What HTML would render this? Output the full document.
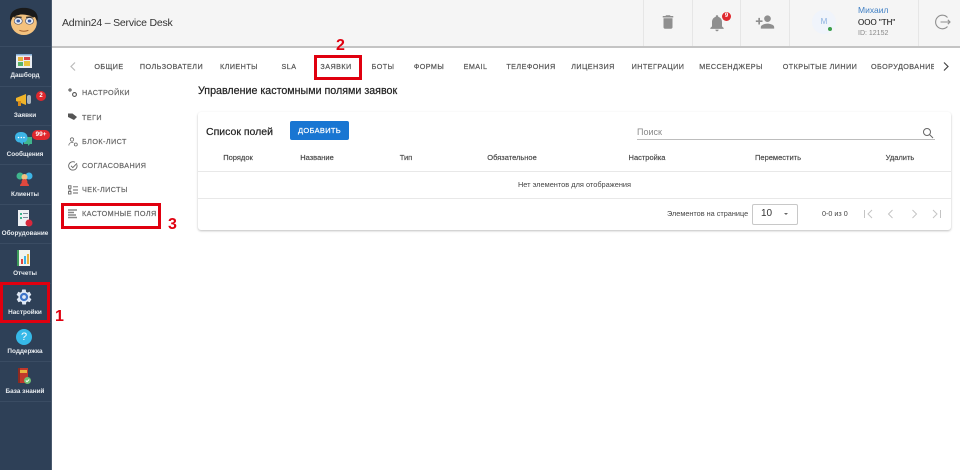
<!DOCTYPE html>
<html><head><meta charset="utf-8">
<style>
html,body{margin:0;padding:0;width:960px;height:470px;overflow:hidden;background:#fff;font-family:"Liberation Sans",sans-serif;color:#333}
.a{position:absolute;white-space:nowrap}
#side{position:absolute;left:0;top:0;width:51px;height:470px;background:#2e4057;border-right:1px solid #4a5a6e;box-sizing:content-box}
.sep{position:absolute;left:0;width:51px;height:1px;background:#3a4c63}
.sl{position:absolute;left:0;width:50px;text-align:center;color:#e8ecf0;font-size:6.4px;font-weight:bold;white-space:nowrap;line-height:9px}
.ic{position:absolute}
#head{position:absolute;left:52px;top:0;width:908px;height:46px;background:#f5f5f5;border-bottom:2px solid #c4c4c4}
.vs{position:absolute;top:0;width:1px;height:46px;background:#e6e6e6}
.tab{position:absolute;top:62px;font-size:7.2px;line-height:10px;letter-spacing:.45px;color:#555;-webkit-text-stroke:.2px #555;white-space:nowrap;text-align:center;transform:translateX(-50%)}
.m{position:absolute;left:82px;font-size:7.2px;line-height:10px;letter-spacing:.45px;color:#666;-webkit-text-stroke:.2px #666;white-space:nowrap}
.th{position:absolute;top:153px;font-size:7.5px;line-height:10px;color:#444;-webkit-text-stroke:.15px #444;white-space:nowrap;transform:translateX(-50%)}
.red{position:absolute;border:3px solid #e0000f;box-sizing:border-box}
.num{position:absolute;color:#e0000f;font-weight:bold;font-size:16px;line-height:16px}
</style></head><body>
<div id="side">
<div class="sep" style="top:46px"></div><div class="sep" style="top:86px"></div><div class="sep" style="top:125px"></div><div class="sep" style="top:164px"></div><div class="sep" style="top:204px"></div><div class="sep" style="top:243px"></div><div class="sep" style="top:283px"></div><div class="sep" style="top:322px"></div><div class="sep" style="top:361px"></div><div class="sep" style="top:401px"></div>

<svg class="ic" style="left:6.600px;top:7px" width="33.750" height="28" viewBox="0 0 30 30" preserveAspectRatio="none">
<ellipse cx="15" cy="17" rx="11.500" ry="13" fill="#f4c27e"/>
<path d="M3 16 C1 5 8 1 15 1 C22 1 29 5 27 16 L25 11 C20 9 17 8 12 8 C9 9 6 10 5 11Z" fill="#1a1a1a"/>
<circle cx="10" cy="15" r="3.600" fill="#e8eef8" stroke="#556" stroke-width=".6"/><circle cx="20" cy="15" r="3.600" fill="#e8eef8" stroke="#556" stroke-width=".6"/>
<circle cx="10" cy="15" r="1.600" fill="#3a5aa0"/><circle cx="20" cy="15" r="1.600" fill="#3a5aa0"/>
<path d="M6 10.500 L13 11 M17 11 L24 10.500" stroke="#222" stroke-width="1.200"/>
<path d="M11 25 Q15 27 19 25" stroke="#a5612e" fill="none" stroke-width="1"/>
</svg>

<svg class="ic" style="left:16px;top:54px" width="17" height="15" viewBox="0 0 17 15">
<rect x="0" y="1" width="16" height="13" fill="#e9edf2"/><rect x="2" y="3" width="5" height="4" fill="#e8b33c"/><rect x="8" y="3" width="6" height="3" fill="#d9454a"/><rect x="2" y="8" width="5" height="4" fill="#58b368"/><rect x="8" y="7" width="6" height="5" fill="#e8c43c"/><rect x="0" y="0" width="16" height="1.500" fill="#7fa8d0"/>
</svg>
<div class="sl" style="top:71px">Дашборд</div>

<svg class="ic" style="left:15px;top:93px" width="18" height="14" viewBox="0 0 18 14">
<path d="M1 5 L11 1 V12 L1 8Z" fill="#f0b429"/><rect x="12" y="2" width="4" height="9" rx="2" fill="#aab4bd"/><rect x="3" y="8" width="3" height="5" fill="#d88a1a"/>
</svg>
<div class="ic" style="left:36px;top:91px;width:10px;height:10px;border-radius:50%;background:#e0282e;color:#fff;font-size:6px;line-height:10px;text-align:center;font-weight:bold">2</div>
<div class="sl" style="top:111px">Заявки</div>

<svg class="ic" style="left:15px;top:132px" width="18" height="15" viewBox="0 0 18 15">
<path d="M9 5 H17 V12 H15 L13 14 V12 H9Z" fill="#3fb58d"/><path d="M6 0 C1 0 0 3 0 5.500 C0 8 2 10.500 5 10.500 L8 13 V10.500 C11 10.500 12.500 8 12.500 5.500 C12.500 3 11 0 6 0Z" fill="#3db5e6"/>
<circle cx="3.500" cy="5.500" r=".8" fill="#fff"/><circle cx="6.300" cy="5.500" r=".8" fill="#fff"/><circle cx="9" cy="5.500" r=".8" fill="#fff"/>
</svg>
<div class="ic" style="left:32px;top:130px;width:18px;height:10px;border-radius:5px;background:#e0282e;color:#fff;font-size:6.500px;line-height:10px;text-align:center;font-weight:bold">99+</div>
<div class="sl" style="top:150px">Сообщения</div>

<svg class="ic" style="left:16px;top:172px" width="17" height="15" viewBox="0 0 17 15">
<circle cx="4" cy="4" r="3.500" fill="#3fb58d"/><circle cx="13" cy="4" r="3.500" fill="#3db5e6"/><circle cx="8.500" cy="5" r="3" fill="#f0c080"/><path d="M4 14 C4 9 13 9 13 14Z" fill="#e0483e"/><circle cx="8.500" cy="10" r="3" fill="#e0483e"/>
</svg>
<div class="sl" style="top:190px">Клиенты</div>

<svg class="ic" style="left:17px;top:210px" width="16" height="17" viewBox="0 0 16 17">
<rect x="1" y="0" width="11" height="16" fill="#eef1f4"/><rect x="3" y="3" width="2" height="2" fill="#3fb58d"/><rect x="3" y="7" width="2" height="2" fill="#3fb58d"/><rect x="6" y="3" width="5" height="1" fill="#7a8a9a"/><rect x="6" y="7" width="5" height="1" fill="#7a8a9a"/><circle cx="12" cy="13" r="3.500" fill="#d8283c"/>
</svg>
<div class="sl" style="top:229px">Оборудование</div>

<svg class="ic" style="left:17px;top:250px" width="14" height="16" viewBox="0 0 14 16">
<rect x="0" y="0" width="13" height="16" fill="#f2f4ee"/><rect x="0" y="0" width="2" height="16" fill="#3d9a5a"/><rect x="4" y="9" width="2" height="5" fill="#e0483e"/><rect x="7" y="6" width="2" height="8" fill="#3db5e6"/><rect x="10" y="4" width="2" height="10" fill="#e8b33c"/>
</svg>
<div class="sl" style="top:269px">Отчеты</div>

<svg class="ic" style="left:15px;top:288px" width="18" height="18" viewBox="0 0 24 24">
<path fill="#dfe8f5" d="M19.400 13c.1-.3.1-.7.1-1s0-.7-.1-1l2.100-1.600c.2-.2.2-.4.1-.6l-2-3.500c-.1-.2-.4-.3-.6-.2l-2.500 1c-.5-.4-1.100-.7-1.700-1l-.4-2.600c0-.3-.2-.5-.5-.5h-4c-.3 0-.5.2-.5.4l-.4 2.700c-.6.2-1.200.6-1.700 1l-2.500-1c-.2-.1-.5 0-.6.2l-2 3.500c-.1.2-.1.5.1.6L4.600 11c0 .3-.1.7-.1 1s0 .7.1 1l-2.100 1.600c-.2.2-.2.4-.1.6l2 3.500c.1.2.4.3.6.2l2.500-1c.5.4 1.100.7 1.700 1l.4 2.600c0 .3.2.5.5.5h4c.3 0 .5-.2.5-.4l.4-2.700c.6-.2 1.200-.6 1.700-1l2.500 1c.2.1.5 0 .6-.2l2-3.500c.1-.2.1-.5-.1-.6z"/>
<circle cx="12" cy="12" r="5.500" fill="#3e74c9"/><circle cx="12" cy="12" r="2.500" fill="#dfe8f5"/>
</svg>
<div class="sl" style="top:308px">Настройки</div>

<div class="ic" style="left:16px;top:329px;width:16px;height:16px;border-radius:50%;background:#36b9e8;color:#fff;font-size:11px;line-height:16px;text-align:center">?</div>
<div class="sl" style="top:347px">Поддержка</div>

<svg class="ic" style="left:17px;top:368px" width="15" height="17" viewBox="0 0 15 17">
<rect x="1" y="0" width="10" height="15" fill="#c0392b"/><rect x="1" y="0" width="2" height="15" fill="#8e2a20"/><rect x="3" y="2" width="7" height="3" fill="#e8b33c"/><circle cx="10.500" cy="12.500" r="3.500" fill="#6fbf73"/><path d="M8.800 12.500l1.200 1.200 2.200-2.200" stroke="#fff" fill="none" stroke-width="1"/>
</svg>
<div class="sl" style="top:387px">База знаний</div>
</div>

<div id="head">
<div class="a" style="left:10px;top:16px;font-size:10.500px;line-height:14px;letter-spacing:-.2px;color:#333">Admin24 – Service Desk</div>
<div class="vs" style="left:591px"></div><div class="vs" style="left:640px"></div><div class="vs" style="left:688px"></div><div class="vs" style="left:737px"></div><div class="vs" style="left:866px"></div>
<svg class="ic" style="left:607px;top:13px" width="18" height="18" viewBox="0 0 24 24"><path fill="#8f8f8f" d="M6 19c0 1.100.9 2 2 2h8c1.100 0 2-.9 2-2V7H6v12zM19 4h-3.500l-1-1h-5l-1 1H5v2h14V4z"/></svg>
<svg class="ic" style="left:655px;top:13px" width="20" height="20" viewBox="0 0 24 24"><path fill="#8f8f8f" d="M12 22c1.100 0 2-.9 2-2h-4c0 1.100.9 2 2 2zm6-6v-5c0-3.100-1.600-5.600-4.500-6.300V4c0-.8-.7-1.500-1.500-1.500s-1.500.7-1.500 1.500v.7C7.600 5.400 6 7.900 6 11v5l-2 2v1h16v-1l-2-2z"/></svg>
<div class="ic" style="left:670px;top:12px;width:9px;height:9px;border-radius:50%;background:#e0282e;color:#fff;font-size:6px;line-height:9px;text-align:center;font-weight:bold">9</div>
<svg class="ic" style="left:703px;top:12px" width="20" height="20" viewBox="0 0 24 24"><path fill="#8f8f8f" d="M15 12c2.200 0 4-1.800 4-4s-1.800-4-4-4-4 1.800-4 4 1.800 4 4 4zm-9-2V7H4v3H1v2h3v3h2v-3h3v-2H6zm9 4c-2.700 0-8 1.300-8 4v2h16v-2c0-2.700-5.300-4-8-4z"/></svg>
<div class="ic" style="left:760px;top:10px;width:24px;height:24px;border-radius:50%;background:#f0f4fb;color:#8ab0e0;font-size:8px;line-height:24px;text-align:center">М</div>
<div class="ic" style="left:776px;top:27px;width:4px;height:4px;border-radius:50%;background:#3c9e4a"></div>
<div class="a" style="left:806px;top:5px;font-size:8.500px;line-height:11px;color:#3f7fc4">Михаил</div>
<div class="a" style="left:806px;top:17px;font-size:8px;line-height:11px;color:#222;-webkit-text-stroke:.1px #222">ООО "ТН"</div>
<div class="a" style="left:806px;top:29px;font-size:7px;line-height:10px;color:#888">ID: 12152</div>
<svg class="ic" style="left:883px;top:14px" width="16" height="16" viewBox="0 0 16 16" fill="none" stroke="#8f8f8f" stroke-width="1.100"><path d="M12.500 3.500A6.800 6.800 0 1 0 12.500 12.500"/><path d="M5.500 8H15M12.800 5.800L15 8l-2.200 2.200"/></svg>
</div>

<svg class="ic" style="left:69px;top:61px" width="8" height="11" viewBox="0 0 8 11"><path d="M6 1.500L2 5.500l4 4" stroke="#bbb" stroke-width="1.200" fill="none"/></svg>
<div class="tab" style="left:109px">ОБЩИЕ</div>
<div class="tab" style="left:171.500px">ПОЛЬЗОВАТЕЛИ</div>
<div class="tab" style="left:239px">КЛИЕНТЫ</div>
<div class="tab" style="left:289px">SLA</div>
<div class="tab" style="left:336px">ЗАЯВКИ</div>
<div class="tab" style="left:383px">БОТЫ</div>
<div class="tab" style="left:429px">ФОРМЫ</div>
<div class="tab" style="left:475.500px">EMAIL</div>
<div class="tab" style="left:531px">ТЕЛЕФОНИЯ</div>
<div class="tab" style="left:593px">ЛИЦЕНЗИЯ</div>
<div class="tab" style="left:658px">ИНТЕГРАЦИИ</div>
<div class="tab" style="left:731px">МЕССЕНДЖЕРЫ</div>
<div class="tab" style="left:820px">ОТКРЫТЫЕ ЛИНИИ</div>
<div class="a" style="left:871px;top:62px;width:63px;overflow:hidden;font-size:7.200px;line-height:10px;letter-spacing:.45px;color:#555;-webkit-text-stroke:.2px #555">ОБОРУДОВАНИЕ</div>
<svg class="ic" style="left:942px;top:61px" width="8" height="11" viewBox="0 0 8 11"><path d="M2 1.500l4 4-4 4" stroke="#444" stroke-width="1.200" fill="none"/></svg>

<svg class="ic" style="left:68px;top:88px" width="10" height="10" viewBox="0 0 10 10" fill="none" stroke="#555" stroke-width="1.100"><circle cx="2" cy="2" r="1.100"/><circle cx="6.500" cy="6.500" r="1.900"/></svg>
<div class="m" style="top:88px">НАСТРОЙКИ</div>
<svg class="ic" style="left:68px;top:112px" width="10" height="10" viewBox="0 0 10 10"><path d="M0 1.500h4.500l4.500 3.500-3 3L0 5z" fill="#555"/></svg>
<div class="m" style="top:113px">ТЕГИ</div>
<svg class="ic" style="left:68px;top:137px" width="10" height="10" viewBox="0 0 10 10" fill="none" stroke="#666" stroke-width=".8"><circle cx="4" cy="2.500" r="1.700"/><path d="M.8 8.500c0-2 1.500-3 3.200-3 .5 0 1 .1 1.400.3"/><circle cx="7.800" cy="7.500" r="1.500"/></svg>
<div class="m" style="top:137px">БЛОК-ЛИСТ</div>
<svg class="ic" style="left:68px;top:161px" width="10" height="10" viewBox="0 0 10 10" fill="none" stroke="#666" stroke-width=".9"><path d="M8.800 3.500A4.200 4.200 0 1 1 7 1.300"/><path d="M3 4.800l1.800 1.800L9 2.300"/></svg>
<div class="m" style="top:161px">СОГЛАСОВАНИЯ</div>
<svg class="ic" style="left:68px;top:185px" width="10" height="10" viewBox="0 0 10 10" fill="none" stroke="#666" stroke-width=".9"><rect x=".5" y=".8" width="2.500" height="2.500"/><rect x=".5" y="6.500" width="2.500" height="2.500"/><path d="M.5 5H3M5 1.800h5M5 5h5M5 8h5"/></svg>
<div class="m" style="top:185px">ЧЕК-ЛИСТЫ</div>
<svg class="ic" style="left:68px;top:209px" width="10" height="10" viewBox="0 0 10 10" stroke="#888" stroke-width="1.400"><path d="M0 1h9M0 3.500h6M0 6h8M0 8.500h9"/></svg>
<div class="m" style="top:209px">КАСТОМНЫЕ ПОЛЯ</div>

<div class="a" style="left:198px;top:84px;font-size:10.700px;line-height:14px;color:#222;-webkit-text-stroke:.2px #222">Управление кастомными полями заявок</div>

<div style="position:absolute;left:198px;top:112px;width:753px;height:118px;background:#fff;border-radius:3px;box-shadow:0 1px 2px rgba(0,0,0,.25)"></div>
<div class="a" style="left:206px;top:125px;font-size:10.500px;line-height:14px;color:#222;-webkit-text-stroke:.2px #222">Список полей</div>
<div class="a" style="left:290px;top:121px;width:59px;height:19px;background:#1976d2;border-radius:2px;color:#fff;font-size:7.500px;-webkit-text-stroke:.2px #fff;line-height:19px;text-align:center;letter-spacing:.3px">ДОБАВИТЬ</div>
<div class="a" style="left:637px;top:127px;font-size:9px;line-height:11px;color:#888">Поиск</div>
<div class="a" style="left:637px;top:139px;width:298px;height:1px;background:#bdbdbd"></div>
<svg class="ic" style="left:922px;top:127px" width="12" height="12" viewBox="0 0 12 12" fill="none" stroke="#666" stroke-width="1"><circle cx="5" cy="5" r="3.500"/><path d="M7.500 7.500L11 11"/></svg>

<div class="th" style="left:238px">Порядок</div>
<div class="th" style="left:317px">Название</div>
<div class="th" style="left:406px">Тип</div>
<div class="th" style="left:512px">Обязательное</div>
<div class="th" style="left:647px">Настройка</div>
<div class="th" style="left:778px">Переместить</div>
<div class="th" style="left:900px">Удалить</div>
<div class="a" style="left:198px;top:171px;width:753px;height:1px;background:#e8e8e8"></div>
<div class="a" style="left:198px;top:180px;width:753px;text-align:center;font-size:7.400px;line-height:10px;color:#444">Нет элементов для отображения</div>
<div class="a" style="left:198px;top:198px;width:753px;height:1px;background:#e8e8e8"></div>
<div class="a" style="left:667px;top:209px;font-size:7.300px;line-height:10px;color:#444">Элементов на странице</div>
<div class="a" style="left:752px;top:204px;width:46px;height:21px;box-sizing:border-box;border:1px solid #c8c8c8;border-radius:2px"></div>
<div class="a" style="left:761px;top:208px;font-size:10px;line-height:12px;color:#333">10</div>
<div class="a" style="left:784px;top:213px;width:0;height:0;border-left:2.500px solid transparent;border-right:2.500px solid transparent;border-top:2.500px solid #666"></div>
<div class="a" style="left:822px;top:209px;font-size:7.200px;line-height:10px;color:#444">0-0 из 0</div>
<svg class="ic" style="left:863px;top:209px" width="80" height="10" viewBox="0 0 80 10" fill="none" stroke="#c4c4c4" stroke-width="1"><path d="M1.500 1v8M9 1L5 5l4 4M29.500 1L25.500 5l4 4M49.500 1l4 4-4 4M70 1l4 4-4 4M77.500 1v8"/></svg>

<div class="red" style="left:0;top:282px;width:50px;height:41px"></div>
<div class="num" style="left:55px;top:309px">1</div>
<div class="red" style="left:314px;top:55px;width:48px;height:25px"></div>
<div class="num" style="left:336px;top:38px">2</div>
<div class="red" style="left:61px;top:203px;width:100px;height:26px"></div>
<div class="num" style="left:168px;top:217px">3</div>
</body></html>
